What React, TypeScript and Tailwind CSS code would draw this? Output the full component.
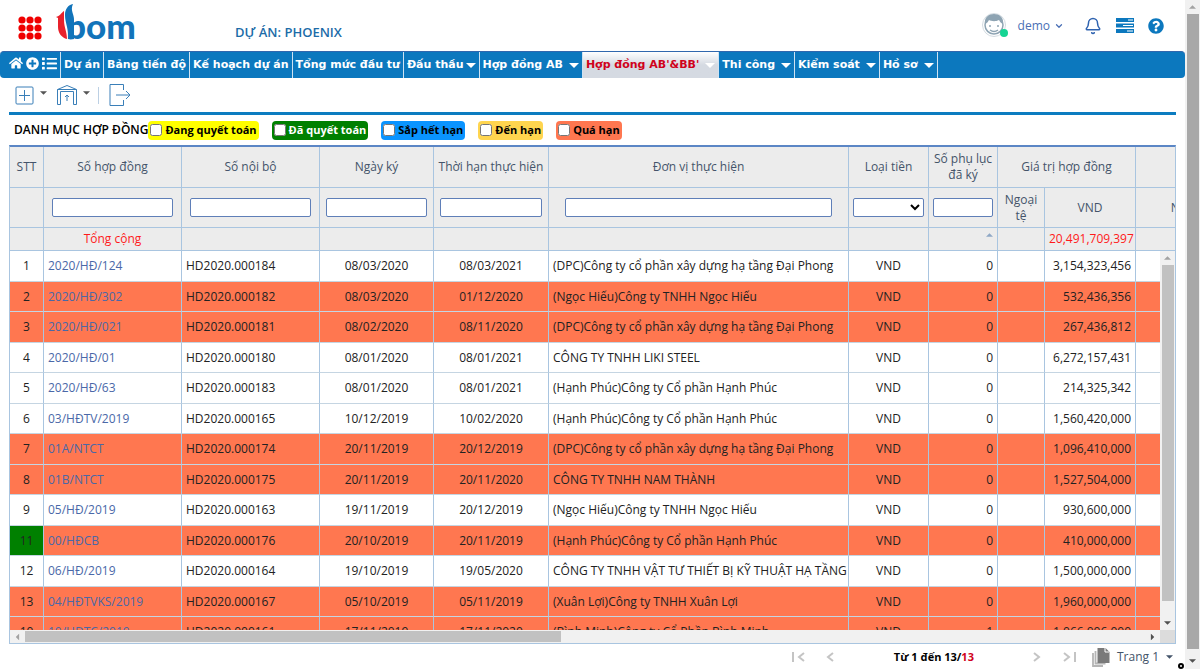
import type { ReactNode } from "react";
import { Bell, ChevronDown } from "lucide-react";
import { FaHome, FaPlusCircle, FaList, FaQuestionCircle } from "react-icons/fa";

type Contract = {
  no: number;
  code: string;
  internal: string;
  signed: string;
  due: string;
  company: string;
  annexes: number;
  value: string;
  overdue?: boolean;
  settled?: boolean;
};

const contracts: Contract[] = [
  { no: 1, code: "2020/HĐ/124", internal: "HD2020.000184", signed: "08/03/2020", due: "08/03/2021", company: "(DPC)Công ty cổ phần xây dựng hạ tầng Đại Phong", annexes: 0, value: "3,154,323,456" },
  { no: 2, code: "2020/HĐ/302", internal: "HD2020.000182", signed: "08/03/2020", due: "01/12/2020", company: "(Ngọc Hiếu)Công ty TNHH Ngọc Hiếu", annexes: 0, value: "532,436,356", overdue: true },
  { no: 3, code: "2020/HĐ/021", internal: "HD2020.000181", signed: "08/02/2020", due: "08/11/2020", company: "(DPC)Công ty cổ phần xây dựng hạ tầng Đại Phong", annexes: 0, value: "267,436,812", overdue: true },
  { no: 4, code: "2020/HĐ/01", internal: "HD2020.000180", signed: "08/01/2020", due: "08/01/2021", company: "CÔNG TY TNHH LIKI STEEL", annexes: 0, value: "6,272,157,431" },
  { no: 5, code: "2020/HĐ/63", internal: "HD2020.000183", signed: "08/01/2020", due: "08/01/2021", company: "(Hạnh Phúc)Công ty Cổ phần Hạnh Phúc", annexes: 0, value: "214,325,342" },
  { no: 6, code: "03/HĐTV/2019", internal: "HD2020.000165", signed: "10/12/2019", due: "10/02/2020", company: "(Hạnh Phúc)Công ty Cổ phần Hạnh Phúc", annexes: 0, value: "1,560,420,000" },
  { no: 7, code: "01A/NTCT", internal: "HD2020.000174", signed: "20/11/2019", due: "20/12/2019", company: "(DPC)Công ty cổ phần xây dựng hạ tầng Đại Phong", annexes: 0, value: "1,096,410,000", overdue: true },
  { no: 8, code: "01B/NTCT", internal: "HD2020.000175", signed: "20/11/2019", due: "20/11/2020", company: "CÔNG TY TNHH NAM THÀNH", annexes: 0, value: "1,527,504,000", overdue: true },
  { no: 9, code: "05/HĐ/2019", internal: "HD2020.000163", signed: "19/11/2019", due: "20/12/2019", company: "(Ngọc Hiếu)Công ty TNHH Ngọc Hiếu", annexes: 0, value: "930,600,000" },
  { no: 11, code: "00/HĐCB", internal: "HD2020.000176", signed: "20/10/2019", due: "20/11/2019", company: "(Hạnh Phúc)Công ty Cổ phần Hạnh Phúc", annexes: 0, value: "410,000,000", overdue: true, settled: true },
  { no: 12, code: "06/HĐ/2019", internal: "HD2020.000164", signed: "19/10/2019", due: "19/05/2020", company: "CÔNG TY TNHH VẬT TƯ THIẾT BỊ KỸ THUẬT HẠ TẦNG", annexes: 0, value: "1,500,000,000" },
  { no: 13, code: "04/HĐTVKS/2019", internal: "HD2020.000167", signed: "05/10/2019", due: "05/11/2019", company: "(Xuân Lợi)Công ty TNHH Xuân Lợi", annexes: 0, value: "1,960,000,000", overdue: true },
  { no: 10, code: "10/HĐTC/2019", internal: "HD2020.000161", signed: "17/11/2019", due: "17/11/2020", company: "(Bình Minh)Công ty Cổ Phần Bình Minh", annexes: 1, value: "1,066,006,000", overdue: true },
];

const menu = [
  { label: "Dự án" },
  { label: "Bảng tiến độ" },
  { label: "Kế hoạch dự án" },
  { label: "Tổng mức đầu tư" },
  { label: "Đấu thầu", caret: true, tight: true },
  { label: "Hợp đồng AB", caret: true },
  { label: "Hợp đồng AB'&BB'", caret: true, active: true },
  { label: "Thi công", caret: true },
  { label: "Kiểm soát", caret: true },
  { label: "Hồ sơ", caret: true },
];

const statuses = [
  { label: "Đang quyết toán", style: "bg-[#ffff00] text-black" },
  { label: "Đã quyết toán", style: "bg-[#008000] text-white" },
  { label: "Sắp hết hạn", style: "bg-[#0a94ff] text-black" },
  { label: "Đến hạn", style: "bg-[#ffd54f] text-black" },
  { label: "Quá hạn", style: "bg-[#ff7750] text-black" },
];

function Caret({ size = 7, className = "" }: { size?: number; className?: string }) {
  return (
    <svg viewBox="0 0 10 5" width={size} height={size > 8 ? 5 : 4} className={`shrink-0 ${className}`} fill="currentColor" aria-hidden="true">
      <path d="M0 0h10L5 5z" />
    </svg>
  );
}

function Logo() {
  return (
    <svg viewBox="0 0 82 40" className="h-10 w-[82px]" role="img" aria-label="1bom">
      <text x="10" y="35" fontFamily="Lato, sans-serif" fontWeight="900" fontSize="35" fill="#1274ba">
        bom
      </text>
      <path d="M9 4h10v13H9z" fill="#fff" />
      <path d="M0 13C4 12 5 9 8 7v9c0 7 3 12 3 19-5-1-9-6-9-12v-9z" fill="#e8212b" />
      <path d="M17 0C12 1 9 5 9 11c0 8 4 14 3 24 3 1 6 0 6 0V15c0-5-4-9-1-15z" fill="#1274ba" />
    </svg>
  );
}

function Avatar() {
  return (
    <svg viewBox="0 0 28 28" className="h-7 w-7" aria-hidden="true">
      <circle cx="12" cy="13" r="11.500" fill="#fff" stroke="#d3dbe1" strokeWidth="1" />
      <circle cx="12" cy="13" r="9" fill="#fff" stroke="#8ea4b3" strokeWidth="1.500" />
      <path d="M3 12C2 5 7 2 12 2s10 3 9 10c-2-1-3-2-4-4-4 2-8 1-10 0-1 2-2 3-4 4z" fill="#8ea4b3" />
      <circle cx="8" cy="14" r="1" fill="#8ea4b3" />
      <circle cx="16" cy="14" r="1" fill="#8ea4b3" />
      <path d="M8 18q4 3 8 0" fill="none" stroke="#8ea4b3" strokeWidth="1.300" />
      <circle cx="22" cy="21" r="4" fill="#15d493" />
    </svg>
  );
}

function Tasks() {
  return (
    <svg viewBox="0 0 18 15" className="h-[15px] w-[18px]" fill="#0c78be" aria-hidden="true">
      <path d="M0 0h18v4H0zM0 5.500h18v4H0zM0 11h18v4H0z" />
      <path d="M12 1.500h5v1h-5zM7 7h10v1H7zM11 12.500h6v1h-6z" fill="#fff" />
    </svg>
  );
}

function Columns() {
  return (
    <colgroup>
      <col className="w-[34px]" />
      <col className="w-[138px]" />
      <col className="w-[138px]" />
      <col className="w-[114px]" />
      <col className="w-[115px]" />
      <col className="w-[300px]" />
      <col className="w-[80px]" />
      <col className="w-[69px]" />
      <col className="w-[47px]" />
      <col className="w-[91px]" />
      <col className="w-[117px]" />
    </colgroup>
  );
}

function Head({ children, ...rest }: { children?: ReactNode; colSpan?: number }) {
  return (
    <th className="border-r border-b border-[#a9c5e0] px-1 font-medium" {...rest}>
      {children}
    </th>
  );
}

function Filter({ label, pad = "" }: { label: string; pad?: string }) {
  return (
    <div className={pad}>
      <input aria-label={label} className="block h-[19px] w-full rounded-xs border border-[#5f7fb8] bg-white px-1 font-normal" />
    </div>
  );
}

function Pager({ label, d }: { label: string; d: string }) {
  return (
    <button aria-label={label}>
      <svg viewBox="0 0 13 10" className="h-[10px] w-[13px]" fill="none" stroke="#c4c4c4" strokeWidth="2">
        <path d={d} />
      </svg>
    </button>
  );
}

export default function App() {
  return (
    <div className="relative flex h-screen w-full overflow-hidden bg-white font-['Open_Sans',sans-serif] text-[12px] leading-4 text-[#222]">
      <div className="flex min-w-0 flex-1 flex-col">
        <header className="flex h-[51px] shrink-0 items-center pr-[21px] pl-[18px]">
          <svg viewBox="0 0 24 24" className="mt-1 h-6 w-6" fill="#f00000" aria-hidden="true">
            {[4, 12, 20].map((y) => [4, 12, 20].map((x) => <circle key={`${x}-${y}`} cx={x} cy={y} r="3.600" />))}
          </svg>
          <div className="ml-[14px] pb-1">
            <Logo />
          </div>
          <h1 className="mt-3 ml-[97px] text-[13px] font-semibold text-[#1c6ca8]">DỰ ÁN: PHOENIX</h1>
          <div className="ml-auto flex items-center">
            <Avatar />
            <button className="ml-2 flex items-center gap-1 text-[#4a6fb5]">
              demo <ChevronDown size={10} strokeWidth={3} />
            </button>
            <button className="ml-5 text-[#2f63b0]" aria-label="Thông báo">
              <Bell size={18} strokeWidth={2} />
            </button>
            <button className="ml-[14px]" aria-label="Công việc">
              <Tasks />
            </button>
            <button className="ml-[14px] text-[#0c78be]" aria-label="Trợ giúp">
              <FaQuestionCircle size={16} />
            </button>
          </div>
        </header>

        <nav className="flex h-[27px] shrink-0 rounded-sm border-t border-[#3167ad] bg-[#0c78be] pl-[9px] font-['DejaVu_Sans',sans-serif] text-[11px] font-bold text-white">
          <div className="flex items-center gap-[3px] border-r border-[#cfe2f2] pr-[3px] pb-1">
            <FaHome size={14} />
            <FaPlusCircle size={13} />
            <FaList size={15} />
          </div>
          {menu.map((item) => (
            <a
              key={item.label}
              href="#"
              className={`flex items-center border-r border-[#cfe2f2] px-[3px] whitespace-nowrap ${item.tight ? "gap-[2px]" : "gap-[6px]"} ${
                item.active ? "bg-linear-to-b from-white via-[#d5dae2] to-[#d5dae2] text-[#d0021b]" : ""
              }`}
            >
              {item.label}
              {item.caret && <Caret size={10} className="text-white" />}
            </a>
          ))}
        </nav>

        <main className="flex flex-col px-[9px]">
          <div className="flex h-[34px] items-center text-[#3a7fb8]">
            <button className="ml-[6px]" aria-label="Thêm">
              <svg viewBox="0 0 19 19" className="h-[19px] w-[19px]" fill="none" stroke="currentColor">
                <rect x="1" y="1" width="17" height="17" rx="1" />
                <path d="M9.500 4v11M4 9.500h11" />
              </svg>
            </button>
            <Caret className="mr-[5px] mb-1 ml-[6px] text-[#555]" />
            <button className="ml-1" aria-label="Kho">
              <svg viewBox="0 0 22 22" className="h-[22px] w-[22px]" fill="none" stroke="currentColor">
                <path d="M1.500 20.500V5.500L11 1.500l9.500 4v15h-3v-13h-13v13h-3M1.500 5.500h19M11 11v6M9 13l2-2 2 2" />
              </svg>
            </button>
            <Caret className="mb-1 ml-[5px] text-[#555]" />
            <span className="ml-2 h-[17px] w-px bg-[#bcd0e4]" />
            <button className="ml-[10px]" aria-label="Xuất">
              <svg viewBox="0 0 22 22" className="h-[22px] w-[22px]" fill="none" stroke="currentColor">
                <path d="M14.500 6V.5H1v21h13.500V16M7 11h14M17 7l4 4-4 4" />
              </svg>
            </button>
          </div>
          <div className="h-[3px] bg-[#0c7cc0]" />

          <div className="flex h-[30px] items-center pl-[5px] font-semibold text-black">
            <h2>DANH MỤC HỢP ĐỒNG</h2>
            <div className="flex gap-[13px]">
              {statuses.map((s) => (
                <label key={s.label} className={`flex h-[19px] items-center gap-[3px] rounded-sm px-[2px] text-[11px] font-bold ${s.style}`}>
                  <input type="checkbox" className="h-3 w-3" />
                  {s.label}
                </label>
              ))}
            </div>
          </div>

          <section className="overflow-hidden border border-t-2 border-[#a9c5e0] border-t-[#5b86c5]">
            <table className="w-[1243px] table-fixed border-separate border-spacing-0 bg-[#ececec] text-[#44546a]">
              <Columns />
              <thead>
                <tr className="h-[41px]">
                  <Head>STT</Head>
                  <Head>Số hợp đồng</Head>
                  <Head>Số nội bộ</Head>
                  <Head>Ngày ký</Head>
                  <Head><span className="whitespace-nowrap">Thời hạn thực hiện</span></Head>
                  <Head>Đơn vị thực hiện</Head>
                  <Head>Loại tiền</Head>
                  <Head>Số phụ lục đã ký</Head>
                  <Head colSpan={2}>Giá trị hợp đồng</Head>
                  <Head />
                </tr>
                <tr className="h-10">
                  <Head />
                  <Head><Filter label="Số hợp đồng" pad="px-1" /></Head>
                  <Head><Filter label="Số nội bộ" pad="px-1" /></Head>
                  <Head><Filter label="Ngày ký" pad="px-[2px]" /></Head>
                  <Head><Filter label="Thời hạn thực hiện" pad="px-[2px]" /></Head>
                  <Head><Filter label="Đơn vị thực hiện" pad="px-3" /></Head>
                  <Head>
                    <select aria-label="Loại tiền" className="block h-[19px] w-full rounded-xs border border-[#5f7fb8] bg-white text-black" />
                  </Head>
                  <Head><Filter label="Số phụ lục đã ký" /></Head>
                  <Head>Ngoại tệ</Head>
                  <Head>VND</Head>
                  <Head>Ngoại tệ</Head>
                </tr>
                <tr className="h-[23px] text-[#ff1a1a]">
                  <Head />
                  <Head>Tổng cộng</Head>
                  <Head />
                  <Head />
                  <Head />
                  <Head />
                  <Head />
                  <Head><Caret className="mb-2 ml-auto rotate-180 text-[#8fa8c6]" /></Head>
                  <Head />
                  <Head>20,491,709,397</Head>
                  <Head />
                </tr>
              </thead>
            </table>

            <div className="flex h-[379px]">
              <div className="min-w-0 flex-1 overflow-hidden">
                <table className="w-[1243px] table-fixed border-separate border-spacing-0 [&_td]:border-r [&_td]:border-b [&_td]:border-[#a9c5e0] [&_td]:border-b-[#c5d5e2] [&_td]:px-1">
                  <Columns />
                  <tbody>
                    {contracts.map((c) => (
                      <tr key={c.no} className={`odd:h-[31px] even:h-[30px] ${c.overdue ? "bg-[#ff7750]" : "bg-white"}`}>
                        <td className={`text-center ${c.settled ? "bg-[#008000]" : ""}`}>{c.no}</td>
                        <td><a href="#" className="text-[#4a68a8]">{c.code}</a></td>
                        <td>{c.internal}</td>
                        <td className="text-center">{c.signed}</td>
                        <td className="text-center">{c.due}</td>
                        <td className="whitespace-nowrap">{c.company}</td>
                        <td className="text-center">VND</td>
                        <td className="text-right">{c.annexes}</td>
                        <td />
                        <td className="text-right">{c.value}</td>
                        <td />
                      </tr>
                    ))}
                  </tbody>
                </table>
              </div>
              <div className="flex w-[15px] flex-col items-center justify-between bg-[#f1f1f1]">
                <Caret className="my-[5px] rotate-180 text-[#a3a3a3]" />
                <div className="w-3 flex-1 bg-[#c1c1c1]" />
                <Caret className="mt-5 mb-[5px] text-[#505050]" />
              </div>
            </div>
            <div className="flex h-[13px] items-center bg-[#f1f1f1]">
              <Caret className="mx-1 rotate-90 text-[#a3a3a3]" />
              <div className="h-[11px] w-[46%] bg-[#c1c1c1]" />
              <Caret className="mr-1 ml-auto -rotate-90 text-[#505050]" />
              <div className="h-full w-[15px] bg-[#dcdcdc]" />
            </div>
          </section>

          <footer className="flex h-[26px] items-center justify-end pr-[3px] text-[#44546a]">
            <div className="flex gap-5">
              <Pager label="Trang đầu" d="M1 0v10M12 1L7 5l5 4" />
              <Pager label="Trang trước" d="M8 1L3 5l5 4" />
            </div>
            <p className="mx-[56px] text-[11px] font-bold text-black">
              Từ 1 đến 13/<span className="text-[#d0021b]">13</span>
            </p>
            <div className="flex gap-5">
              <Pager label="Trang sau" d="M4 1l5 4-5 4" />
              <Pager label="Trang cuối" d="M1 1l5 4-5 4M12 0v10" />
            </div>
            <button className="ml-4 flex items-center gap-[7px]">
              <svg viewBox="0 0 18 20" className="h-5 w-[18px]" aria-hidden="true">
                <path d="M1 6v13h10M3.500 4v12.500h10" fill="none" stroke="#b5b5b5" strokeWidth="1.800" />
                <path d="M5.500 1h8l4 4v11h-12z" fill="#7a7a7a" />
                <path d="M13 1v4h4" fill="none" stroke="#fff" />
              </svg>
              Trang 1 <Caret />
            </button>
          </footer>
        </main>
      </div>

      <div className="flex w-[15px] flex-col items-center bg-[#f1f1f1]">
        <Caret className="my-[5px] rotate-180 text-[#a3a3a3]" />
        <div className="w-3 flex-1 bg-[#a8a8a8]" />
        <Caret className="mt-[10px] mb-[6px] text-[#505050]" />
      </div>
      <span className="absolute right-4 bottom-0 h-[6px] w-[6px] rounded-full border-2 border-black" />
    </div>
  );
}
